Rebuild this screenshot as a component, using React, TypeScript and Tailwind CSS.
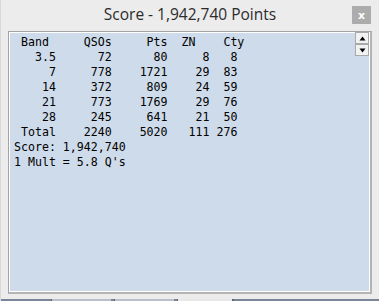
const rows = [
  ['3.5', 72, 80, 8, 8],
  ['7', 778, 1721, 29, 83],
  ['14', 372, 809, 24, 59],
  ['21', 773, 1769, 29, 76],
  ['28', 245, 641, 21, 50],
  ['Total', 2240, 5020, 111, 276],
]

function line(r: (string | number)[]) {
  const [band, qsos, pts, zn, cty] = r
  return (
    String(band).padStart(6) +
    String(qsos).padStart(8) +
    String(pts).padStart(8) +
    String(zn).padStart(6) +
    String(cty).padStart(4)
  )
}

const text = [
  ' Band     QSOs     Pts  ZN    Cty',
  ...rows.map(line),
  'Score: 1,942,740',
  "1 Mult = 5.8 Q's",
].join('\n')

function ScrollButton({ up }: { up?: boolean }) {
  return (
    <div className="w-[14px] h-[12px] bg-[#f2f2f2] border border-[#a9a9a9] flex items-center justify-center">
      <svg width="7" height="5" viewBox="0 0 7 5">
        {up ? <path d="M3.5 0.5 L6.5 4.5 L0.5 4.5 Z" fill="#000" /> : <path d="M0.5 0.5 L6.5 0.5 L3.5 4.5 Z" fill="#000" />}
      </svg>
    </div>
  )
}

export default function App() {
  return (
    <div className="w-[379px] h-[301px] bg-[#ececec] flex flex-col border-l border-[#d9d9d9] overflow-hidden">
      <div className="h-[31px] grid grid-cols-[1fr_auto_1fr] items-center">
        <div />
        <div className="text-[15.5px] text-[#2b2b2b] font-['Open_Sans',sans-serif] pb-[1px]">
          Score - 1,942,740 Points
        </div>
        <div className="flex justify-end pr-[8px] pb-[1px]">
          <div className="w-[19px] h-[18px] bg-[#acacac] text-white text-[11px] font-bold leading-none flex items-center justify-center font-['DejaVu_Sans',sans-serif]">
            x
          </div>
        </div>
      </div>
      <div className="mx-[7px] h-[263px] border-t border-l border-r-2 border-b-2 border-t-[#a3a3a3] border-l-[#a3a3a3] border-r-[#b4b4b4] border-b-[#b4b4b4]">
        <div className="h-full border border-white bg-[#cedbea] flex">
          <pre className="flex-1 pl-[4px] pt-[2px] text-[11.6px] leading-[15px] text-black font-['DejaVu_Sans_Mono',monospace]">
            {text}
          </pre>
          <div className="flex flex-col -mt-[1px]">
            <ScrollButton up />
            <ScrollButton />
          </div>
        </div>
      </div>
      <div className="flex-1" />
      <div className="h-[2px] bg-[#7a8597] flex">
        <div className="ml-[50px] w-[60px] bg-[#b9c0cc] border-l border-[#5d6677]" />
        <div className="ml-[3px] w-[60px] bg-[#b9c0cc] border-l border-[#5d6677]" />
        <div className="ml-[3px] w-[57px] bg-[#e8e8e8] border-l border-r-2 border-[#5d6677]" />
      </div>
    </div>
  )
}
